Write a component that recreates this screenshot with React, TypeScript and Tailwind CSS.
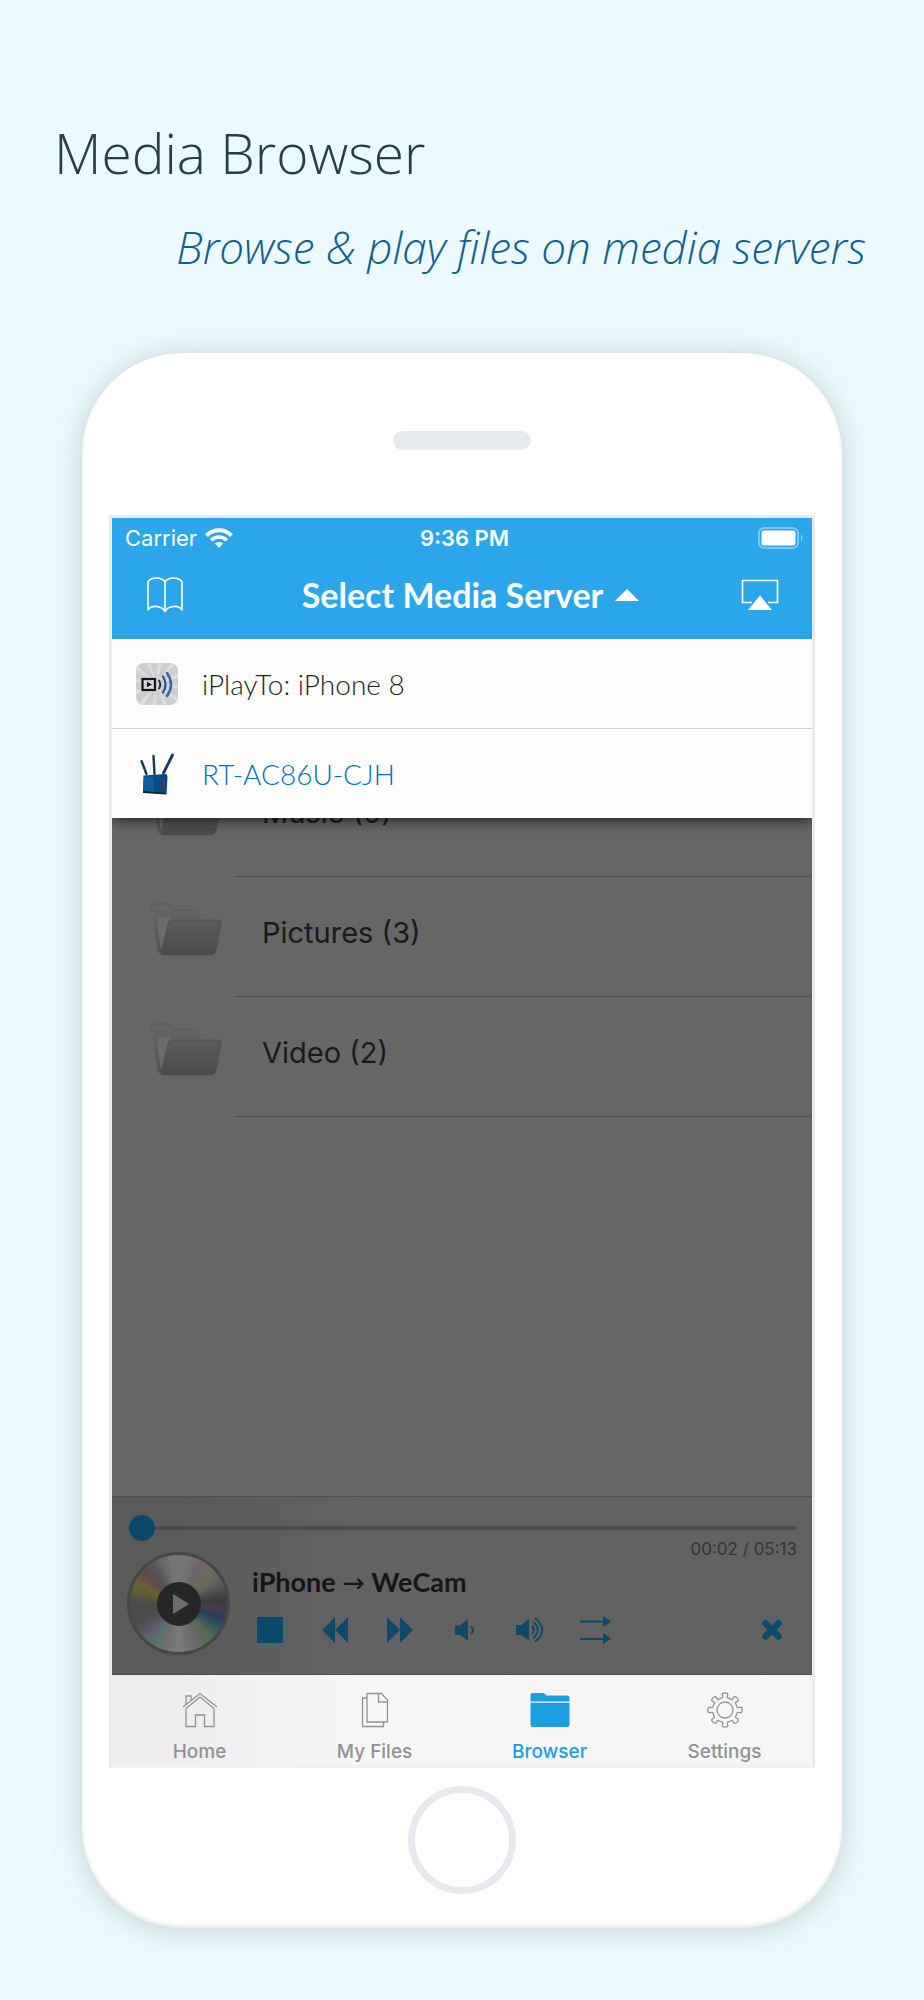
import { useState } from "react";
import type { ReactNode } from "react";

const servers = [
    { id: "iplayto", name: "iPlayTo: iPhone 8", icon: <CastAppIcon />, className: "text-[#1f1f1f]" },
    { id: "router", name: "RT-AC86U-CJH", icon: <RouterIcon />, className: "text-[#0070c0]" },
];

const folders = ["Music (0)", "Pictures (3)", "Video (2)"];

const tabs = [
    { label: "Home", icon: <HomeIcon /> },
    { label: "My Files", icon: <FilesIcon /> },
    { label: "Browser", icon: <BrowserIcon /> },
    { label: "Settings", icon: <GearIcon /> },
];

function WifiIcon() {
    return (
        <svg width="28" height="20" viewBox="0 0 28 20" fill="none" stroke="white" strokeWidth="4">
            <path d="M1.5 7.6a17.5 17.5 0 0 1 25 0" />
            <path d="M6.2 12.2a11 11 0 0 1 15.6 0" strokeWidth="3.6" />
            <path d="M14 20l-4.2-4.4a6.2 6.2 0 0 1 8.4 0z" fill="white" stroke="none" />
        </svg>
    );
}

function BatteryIcon() {
    return (
        <svg width="46" height="22" viewBox="0 0 46 22">
            <rect x="1" y="1" width="39" height="20" rx="5" fill="none" stroke="#8fd0f6" strokeWidth="1.6" />
            <rect x="3.5" y="3.5" width="34" height="15" rx="2.5" fill="white" />
            <path d="M43 7.5c1.8 1 1.8 6 0 7z" fill="#8fd0f6" />
        </svg>
    );
}

function BookIcon() {
    return (
        <svg width="38" height="38" viewBox="0 0 38 38" fill="none" stroke="white" strokeWidth="1.6" strokeLinejoin="round">
            <path d="M19 6c-3-5.3-14-5.3-17 0v28c3-5 13.5-5 17 1.5c3.5-6.5 14-6.5 17-1.5V6c-3-5.3-14-5.3-17 0z" />
            <path d="M19 6v29" />
        </svg>
    );
}

function AirplayIcon() {
    return (
        <svg width="38" height="32" viewBox="0 0 38 32">
            <path d="M11 23.5H1.5V1.5h35v22H27" fill="none" stroke="white" strokeWidth="1.6" />
            <path d="M19 16.5L31 31H7z" fill="white" />
        </svg>
    );
}

function CastAppIcon() {
    const rays = Array.from({ length: 12 }, (_, i) => i * 30 + 8);
    return (
        <svg width="42" height="42" viewBox="0 0 42 42">
            <defs>
                <clipPath id="cast-clip">
                    <rect width="42" height="42" rx="8" />
                </clipPath>
            </defs>
            <g clipPath="url(#cast-clip)">
                <rect width="42" height="42" fill="#cdcdcd" />
                {rays.map((a) => (
                    <path key={a} d="M21 21L18 -12h6z" fill="#dcdcdc" transform={`rotate(${a} 21 21)`} />
                ))}
            </g>
            <rect x="6.5" y="16" width="12.5" height="11" fill="none" stroke="#10131a" strokeWidth="2.2" />
            <path d="M11 18.8v5.4l5-2.7z" fill="#10131a" />
            <g fill="none" strokeLinecap="round">
                <path d="M23 17.5q2.6 4 0 8" stroke="#1c3350" strokeWidth="2" />
                <path d="M27 13.5q5 8 0 16" stroke="#2d5590" strokeWidth="2.2" />
                <path d="M31 10q8 11.5 0 23" stroke="#3564ae" strokeWidth="2.5" />
            </g>
        </svg>
    );
}

function RouterIcon() {
    return (
        <svg width="42" height="42" viewBox="0 0 42 42">
            <g strokeLinecap="round" stroke="#123a5e">
                <path d="M5.5 8l5 13" strokeWidth="2.4" />
                <path d="M17.5 3l1 18" strokeWidth="2.4" />
                <path d="M36.5 2L27.5 20" strokeWidth="2.8" />
            </g>
            <path d="M7.5 22.5l23-1.5 1 3-1 17-23.5-2z" fill="#0e4a80" />
            <path d="M8 23l10 1.5v15L7 38.5z" fill="#115c9c" />
            <path d="M7 38l23.5 2v1.5L7 40z" fill="#0a2440" />
            <path d="M28.5 28l-4 8" stroke="#7b2a3c" strokeWidth="1" />
        </svg>
    );
}

function FolderIcon() {
    return (
        <svg width="72" height="54" viewBox="0 0 72 54">
            <defs>
                <linearGradient id="folder-front" x1="0" y1="0" x2="0" y2="1">
                    <stop offset="0" stopColor="#5e5e5e" />
                    <stop offset="1" stopColor="#4a4a4a" />
                </linearGradient>
                <linearGradient id="folder-back" x1="0" y1="0" x2="0" y2="1">
                    <stop offset="0" stopColor="#666666" />
                    <stop offset="1" stopColor="#525252" />
                </linearGradient>
            </defs>
            <path d="M1.5 6Q1 2 5 2h14q3 0 4 4h23q3 0 4 3v10L60 52H12q-4 0-4.500-4z" fill="url(#folder-back)" />
            <path d="M1.5 7Q1 2 5 2h14q3 0 4 3M24 8h22q3 0 4 3" fill="none" stroke="#585858" />
            <path d="M7 18q0-3 3-3h10L12 46h-1.5z" fill="#6b6b6b" />
            <path
                d="M22 18h46q3.5 0 3 4l-5 27q-.7 4-5 4H13q-3 0-2-3l7-28q1-4 4-4z"
                fill="url(#folder-front)"
                stroke="#525252"
                strokeWidth=".8"
            />
        </svg>
    );
}

function HomeIcon() {
    return (
        <svg width="36" height="36" viewBox="0 0 36 36" fill="none" stroke="#929292" strokeWidth="1.3">
            <path d="M1 15L18 1.5 35 15" />
            <path d="M4 16.5L18 5l14 11.5V34.5h-9.5V23h-9v11.5H4z" />
            <path d="M4 12.5V4h5v4.5" />
        </svg>
    );
}

function FilesIcon() {
    return (
        <svg width="28" height="36" viewBox="0 0 28 36" fill="none" stroke="#929292" strokeWidth="1.3">
            <path d="M6 1.5h14.5L26.5 8v22H6z" />
            <path d="M17.5 1.5V10h9" />
            <path d="M6 6H1.5v28.5h21V30" />
        </svg>
    );
}

function BrowserIcon() {
    return (
        <svg width="40" height="36" viewBox="0 0 40 36" fill="#1b9fe2">
            <path d="M.5 9.5V3q0-2 2-2h10q1.5 0 2.5 1l1.5 1.5H37.5q2 0 2 2v4z" />
            <path d="M.5 10.8h39V32.5q0 2.5-2 2.5h-35q-2 0-2-2.5z" />
        </svg>
    );
}

// outline of an eight-toothed wheel, corners rounded through edge midpoints
function gearPath() {
    const pts: number[][] = [];
    for (let i = 0; i < 8; i++) {
        const offsets = [[-16, 12.5], [-9, 12.5], [-11, 17.5], [11, 17.5], [9, 12.5], [16, 12.5]];
        for (const [deg, r] of offsets) {
            const a = ((i * 45 + deg) * Math.PI) / 180;
            pts.push([18 + r * Math.sin(a), 18 - r * Math.cos(a)]);
        }
    }
    const mid = (a: number[], b: number[]) => `${((a[0] + b[0]) / 2).toFixed(2)} ${((a[1] + b[1]) / 2).toFixed(2)}`;
    let d = `M${mid(pts[pts.length - 1], pts[0])}`;
    pts.forEach((p, i) => {
        d += `Q${p[0].toFixed(2)} ${p[1].toFixed(2)} ${mid(p, pts[(i + 1) % pts.length])}`;
    });
    return d + "z";
}

function GearIcon() {
    return (
        <svg width="36" height="36" viewBox="0 0 36 36" fill="none" stroke="#929292" strokeWidth="1.3">
            <path d={gearPath()} />
            <circle cx="18" cy="18" r="8" />
        </svg>
    );
}

function ControlButton({ label, children }: { label: string; children: ReactNode }) {
    return (
        <button type="button" aria-label={label} className="flex h-8 w-8 items-center justify-center text-[#0b4a6a]">
            {children}
        </button>
    );
}

function Player() {
    const [position, setPosition] = useState(1);

    return (
        <section className="border-t border-b border-[#4f4f4f] bg-[#626262] bg-linear-to-r from-[#5a5a5a] from-10% to-[#626262] to-35% px-[15px] pt-[18px] pb-[19px]">
            <input
                type="range"
                aria-label="Playback position"
                min={0}
                max={313}
                value={position}
                onChange={(e) => setPosition(Number(e.target.value))}
                className="block h-[26px] w-full appearance-none bg-transparent [&::-webkit-slider-runnable-track]:h-1 [&::-webkit-slider-runnable-track]:rounded-full [&::-webkit-slider-runnable-track]:bg-[#4b4b4b] [&::-webkit-slider-thumb]:-mt-[11px] [&::-webkit-slider-thumb]:size-[26px] [&::-webkit-slider-thumb]:appearance-none [&::-webkit-slider-thumb]:rounded-full [&::-webkit-slider-thumb]:bg-[#0b4a6a]"
            />
            <div className="flex">
                <button
                    type="button"
                    aria-label="Play"
                    className="mt-[11px] flex size-[103px] shrink-0 items-center justify-center rounded-full border-[3px] border-[#474747] bg-[conic-gradient(#757575,#737373_15deg,#6d636f_28deg,#6c6b5c_42deg,#646464_58deg,#3c3c3c_85deg,#453c4a_98deg,#2c3c5c_108deg,#33555c_122deg,#566a52_135deg,#666666_150deg,#7b7b7b_180deg,#6e6e6e_200deg,#54746c_212deg,#5c5870_228deg,#4c4c4c_245deg,#4a4a4a_270deg,#62602e_288deg,#6b6038_298deg,#644848_310deg,#555555_325deg,#757575_350deg)]"
                >
                    <span className="flex size-11 items-center justify-center rounded-full bg-[#262626]">
                        <svg width="16" height="20" viewBox="0 0 16 20" className="ml-1 fill-[#6c6c6c]">
                            <path d="M0 0l16 10L0 20z" />
                        </svg>
                    </span>
                </button>
                <div className="ml-[22px] min-w-0 grow">
                    <p className="text-right font-['Inter',sans-serif] text-[17px] leading-4 text-[#353535]">00:02 / 05:13</p>
                    <h2 className="font-['Lato',sans-serif] text-[27px] leading-[50px] font-bold text-[#161616]">
                        iPhone <span className="font-['DejaVu_Sans',sans-serif] font-normal">→</span> WeCam
                    </h2>
                    <div className="mt-[6px] ml-[2px] flex items-center gap-[33px]">
                        <ControlButton label="Stop">
                            <svg width="26" height="26" viewBox="0 0 26 26" fill="currentColor">
                                <rect width="26" height="26" rx="1" />
                            </svg>
                        </ControlButton>
                        <ControlButton label="Rewind">
                            <svg width="26" height="26" viewBox="0 0 26 26" fill="currentColor">
                                <path d="M13 0v26L0 13zM26 0v26L13 13z" />
                            </svg>
                        </ControlButton>
                        <ControlButton label="Fast forward">
                            <svg width="26" height="26" viewBox="0 0 26 26" fill="currentColor">
                                <path d="M0 0v26l13-13zM13 0v26l13-13z" />
                            </svg>
                        </ControlButton>
                        <ControlButton label="Volume down">
                            <svg width="20" height="22" viewBox="0 0 20 22" fill="currentColor">
                                <path d="M0 6.5h5L13 0v22l-8-6H0z" />
                                <path d="M16 7.5q4 3.5 0 7.5" fill="none" stroke="currentColor" strokeWidth="2" />
                            </svg>
                        </ControlButton>
                        <ControlButton label="Volume up">
                            <svg width="29" height="26" viewBox="0 0 29 26" fill="currentColor">
                                <path d="M0 8h5.5L13 2v21.5L5.5 18H0z" />
                                <g fill="none" stroke="currentColor" strokeWidth="1.9">
                                    <path d="M16 9q4 4 0 8" />
                                    <path d="M17.5 5q8.5 8 0 16" />
                                    <path d="M19 1q14.5 12 0 24" />
                                </g>
                            </svg>
                        </ControlButton>
                        <ControlButton label="Play in order">
                            <svg width="31" height="28" viewBox="0 0 31 28" fill="currentColor">
                                <path d="M0 4.5h23V0l8 5.5-8 5.5V6.5H0zM0 22h23v-5l8 5.5-8 5.5v-4H0z" />
                            </svg>
                        </ControlButton>
                        <div className="mr-[9px] ml-auto">
                            <ControlButton label="Close player">
                                <svg width="20" height="20" viewBox="0 0 20 20" stroke="currentColor" strokeWidth="6.5" strokeLinecap="round">
                                    <path d="M3.5 3.5l13 13M16.5 3.5l-13 13" />
                                </svg>
                            </ControlButton>
                        </div>
                    </div>
                </div>
            </div>
        </section>
    );
}

export default function App() {
    const [activeTab, setActiveTab] = useState("Browser");

    return (
        <div className="min-h-screen bg-[#eafaff] px-[54px] pt-[113px] pb-[73px]">
            {/* headline */}
            <h1 className="font-['Open_Sans',sans-serif] text-[55px] leading-[80px] font-light text-[#243f4e]">Media Browser</h1>
            <p className="mt-[22px] pr-1 text-right font-['Open_Sans',sans-serif] text-[44px] leading-[64px] font-light whitespace-nowrap text-[#12608c] italic">
                Browse &amp; play files on media servers
            </p>

            {/* phone */}
            <div className="mx-7 mt-[74px] rounded-[100px] bg-white px-[27px] pt-[78px] pb-[34px] shadow-[0_2px_28px_rgba(120,130,110,0.35),inset_0_-2px_4px_rgba(0,0,0,0.1)]">
                <div className="mx-auto h-[19px] w-[138px] rounded-full bg-[#e6eaef]" />

                <div className="mt-[65px] border-[3px] border-[#e8ebf0] border-b-[#eff1f4]">
                    <header className="bg-[#2ca6ea] text-white">
                        <div className="grid grid-cols-3 items-center px-2 pt-2 pl-[13px] font-['Inter',sans-serif] text-[22px] leading-6">
                            <div className="flex items-center gap-2">
                                Carrier
                                <WifiIcon />
                            </div>
                            <span className="text-center font-semibold">9:36 PM</span>
                            <span className="flex justify-end">
                                <BatteryIcon />
                            </span>
                        </div>
                        <div className="flex h-[89px] items-center justify-between pr-[33px] pl-[34px]">
                            <button type="button" aria-label="Bookmarks">
                                <BookIcon />
                            </button>
                            <button
                                type="button"
                                aria-expanded="true"
                                className="ml-4 flex items-center gap-3 font-['Lato',sans-serif] text-[34px] leading-10 font-bold"
                            >
                                Select Media Server
                                <svg width="24" height="12" viewBox="0 0 24 12" fill="white">
                                    <path d="M12 0l12 12H0z" />
                                </svg>
                            </button>
                            <button type="button" aria-label="AirPlay">
                                <AirplayIcon />
                            </button>
                        </div>
                    </header>

                    {/* folder list, dimmed while the server menu is open */}
                    <main className="relative min-h-[857px] bg-[#666666] pt-[118px]">
                        <ul>
                            {folders.map((name) => (
                                <li key={name} className="flex h-[120px] pl-[38px]">
                                    <span className="flex w-[85px] items-center pb-4">
                                        <FolderIcon />
                                    </span>
                                    <span className="flex grow items-center border-b border-[#505050] pb-2 pl-[27px] font-['Inter',sans-serif] text-[29px] text-[#1a1a1a]">
                                        {name}
                                    </span>
                                </li>
                            ))}
                        </ul>
                        <ul className="absolute inset-x-0 top-0 divide-y divide-[#cfcfd1] bg-[#fdfdfd] shadow-[0_2px_12px_rgba(0,0,0,0.7)] [clip-path:inset(0_0_-24px_0)]">
                            {servers.map((server) => (
                                <li key={server.id}>
                                    <button type="button" className="flex h-[89px] w-full items-center gap-6 px-6 text-left">
                                        {server.icon}
                                        <span className={`font-['Lato',sans-serif] text-[28px] leading-8 font-light ${server.className}`}>
                                            {server.name}
                                        </span>
                                    </button>
                                </li>
                            ))}
                        </ul>
                    </main>

                    <Player />

                    {/* tab bar */}
                    <nav className="grid grid-cols-4 bg-[#f6f6f7] bg-linear-to-r from-[#eeedf0] from-10% to-[#f6f6f7] to-35%">
                        {tabs.map((tab) => (
                            <button
                                key={tab.label}
                                type="button"
                                onClick={() => setActiveTab(tab.label)}
                                className={`flex flex-col items-center gap-[13px] pt-[17px] pb-[2px] font-['Inter',sans-serif] text-[19px] leading-[22px] font-medium ${
                                    activeTab === tab.label ? "text-[#1b9fe2]" : "text-[#929292]"
                                }`}
                            >
                                {tab.icon}
                                {tab.label}
                            </button>
                        ))}
                    </nav>
                </div>

                <button
                    type="button"
                    aria-label="Home button"
                    className="mx-auto mt-[18px] block size-[108px] rounded-full border-[7px] border-[#e6eaef]"
                />
            </div>
        </div>
    );
}
